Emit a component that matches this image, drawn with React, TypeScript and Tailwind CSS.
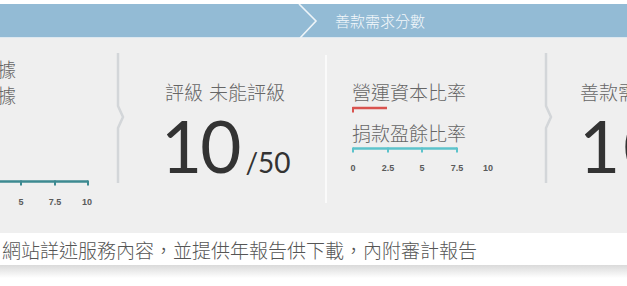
import React from "react";

const cjk = "font-['Noto_Sans_CJK_TC','Noto_Sans_CJK_SC',sans-serif]";

function Divider() {
  return (
    <svg width="10" height="130" viewBox="0 0 10 130" className="shrink-0 mt-[15px]">
      <path d="M2 0 V53 L7 64 L2 75 V130" fill="none" stroke="#d3d6d9" strokeWidth="2.5" />
    </svg>
  );
}

function Axis({
  ticks,
  lineEnd,
  color,
  labels,
  labelY,
}: {
  ticks: number[];
  lineEnd: number;
  color: string;
  labels: { x: number; t: string }[];
  labelY: number;
}) {
  return (
    <>
      <line x1={ticks[0]} y1={2.5} x2={lineEnd} y2={2.5} stroke={color} strokeWidth={2.5} />
      {ticks.map((x) => (
        <line key={x} x1={x} y1={1.5} x2={x} y2={6.5} stroke={color} strokeWidth={2} />
      ))}
      {labels.map((l) => (
        <text
          key={l.t}
          x={l.x}
          y={labelY}
          textAnchor="middle"
          fontSize="9"
          fontWeight="700"
          fill="#5a5a5a"
          fontFamily="'Liberation Sans', Arial, sans-serif"
        >
          {l.t}
        </text>
      ))}
    </>
  );
}

export default function App() {
  return (
    <div className={`w-[627px] h-[286px] overflow-hidden bg-white ${cjk}`}>
      <div className="h-[4px]" />
      {/* header */}
      <div className="h-[34px] bg-[#93bbd5] flex items-center border-b border-[#dde8f0]">
        <svg width="22" height="34" viewBox="0 0 22 34" className="ml-[297px] shrink-0">
          <path d="M2 0 L19 17 L3 34" fill="none" stroke="#eef4f8" strokeWidth="1.6" />
        </svg>
        <div className="ml-[16px] text-[15px] leading-none font-light text-[#f4f8fb] whitespace-nowrap">善款需求分數</div>
      </div>

      {/* content */}
      <div className="h-[195px] bg-[#efefef] flex">
        {/* panel 1 */}
        <div className="w-[116px] shrink-0 flex flex-col pt-[18px]">
          <div className="w-[16px] flex justify-end whitespace-nowrap text-[19px] leading-[26px] font-light text-[#666]">財務資料依據</div>
          <div className="w-[16px] flex justify-end whitespace-nowrap text-[19px] leading-[26px] font-light text-[#666]">年度報告依據</div>
          <svg width="145" height="30" viewBox="0 0 145 30" className="-ml-[50px] mt-[71px] shrink-0">
            <Axis
              ticks={[3, 37, 71, 105, 138]}
              lineEnd={138}
              color="#3d8a91"
              labelY={26}
              labels={[
                { x: 3, t: "0" },
                { x: 37, t: "2.5" },
                { x: 71, t: "5" },
                { x: 105, t: "7.5" },
                { x: 137, t: "10" },
              ]}
            />
          </svg>
        </div>

        <Divider />

        {/* panel 2 */}
        <div className="w-[199px] shrink-0 pl-[39px] pt-[41px]">
          <div className="text-[19px] leading-[26px] font-light text-[#666] whitespace-nowrap">
            評級<span className="ml-[6px]">未能評級</span>
          </div>
          <div className="mt-[5px] font-['Lato',sans-serif] font-normal text-[71px] leading-none text-[#333] tracking-[-2px] whitespace-nowrap -ml-[4px]">
            10<span className="text-[28px] tracking-normal ml-[6px]">/50</span>
          </div>
        </div>

        <div className="w-[2px] h-[148px] mt-[17px] bg-[#fafafa] shrink-0" />

        {/* panel 3 */}
        <div className="w-[217px] shrink-0 pl-[25px] pt-[41px] flex flex-col">
          <div className="text-[19px] leading-[26px] font-light text-[#666] whitespace-nowrap">營運資本比率</div>
          <svg width="40" height="8" viewBox="0 0 40 8" className="mt-[1px] -ml-[2px] shrink-0">
            <line x1="2.5" y1="2" x2="37" y2="2" stroke="#d9534f" strokeWidth="2.5" />
            <line x1="3" y1="1" x2="3" y2="6.5" stroke="#d9534f" strokeWidth="2" />
          </svg>
          <div className="mt-[6px] text-[19px] leading-[26px] font-light text-[#666] whitespace-nowrap">捐款盈餘比率</div>
          <svg width="150" height="30" viewBox="0 0 150 30" className="-ml-[2px] shrink-0">
            <Axis
              ticks={[3, 38, 72, 107]}
              lineEnd={107}
              color="#5cc3cb"
              labelY={25}
              labels={[
                { x: 3, t: "0" },
                { x: 38, t: "2.5" },
                { x: 72, t: "5" },
                { x: 107, t: "7.5" },
                { x: 138, t: "10" },
              ]}
            />
          </svg>
        </div>

        <Divider />

        {/* panel 4 */}
        <div className="flex-1 pl-[26px] pt-[41px] overflow-hidden">
          <div className="text-[19px] leading-[26px] font-light text-[#666] whitespace-nowrap">善款需求分數</div>
          <div className="mt-[5px] font-['Lato',sans-serif] font-normal text-[71px] leading-none text-[#333] tracking-[3px] whitespace-nowrap -ml-[1px]">
            10<span className="text-[28px] tracking-normal ml-[6px]">/50</span>
          </div>
        </div>
      </div>

      {/* bottom strip */}
      <div className="h-[32px] bg-white flex items-center pl-[2px]">
        <div className="text-[19px] leading-none font-light text-[#555] whitespace-nowrap">
          網站詳述服務內容，並提供年報告供下載，內附審計報告
        </div>
      </div>
      <div className="h-[13px] bg-gradient-to-b from-[#dadada] to-white" />
    </div>
  );
}
